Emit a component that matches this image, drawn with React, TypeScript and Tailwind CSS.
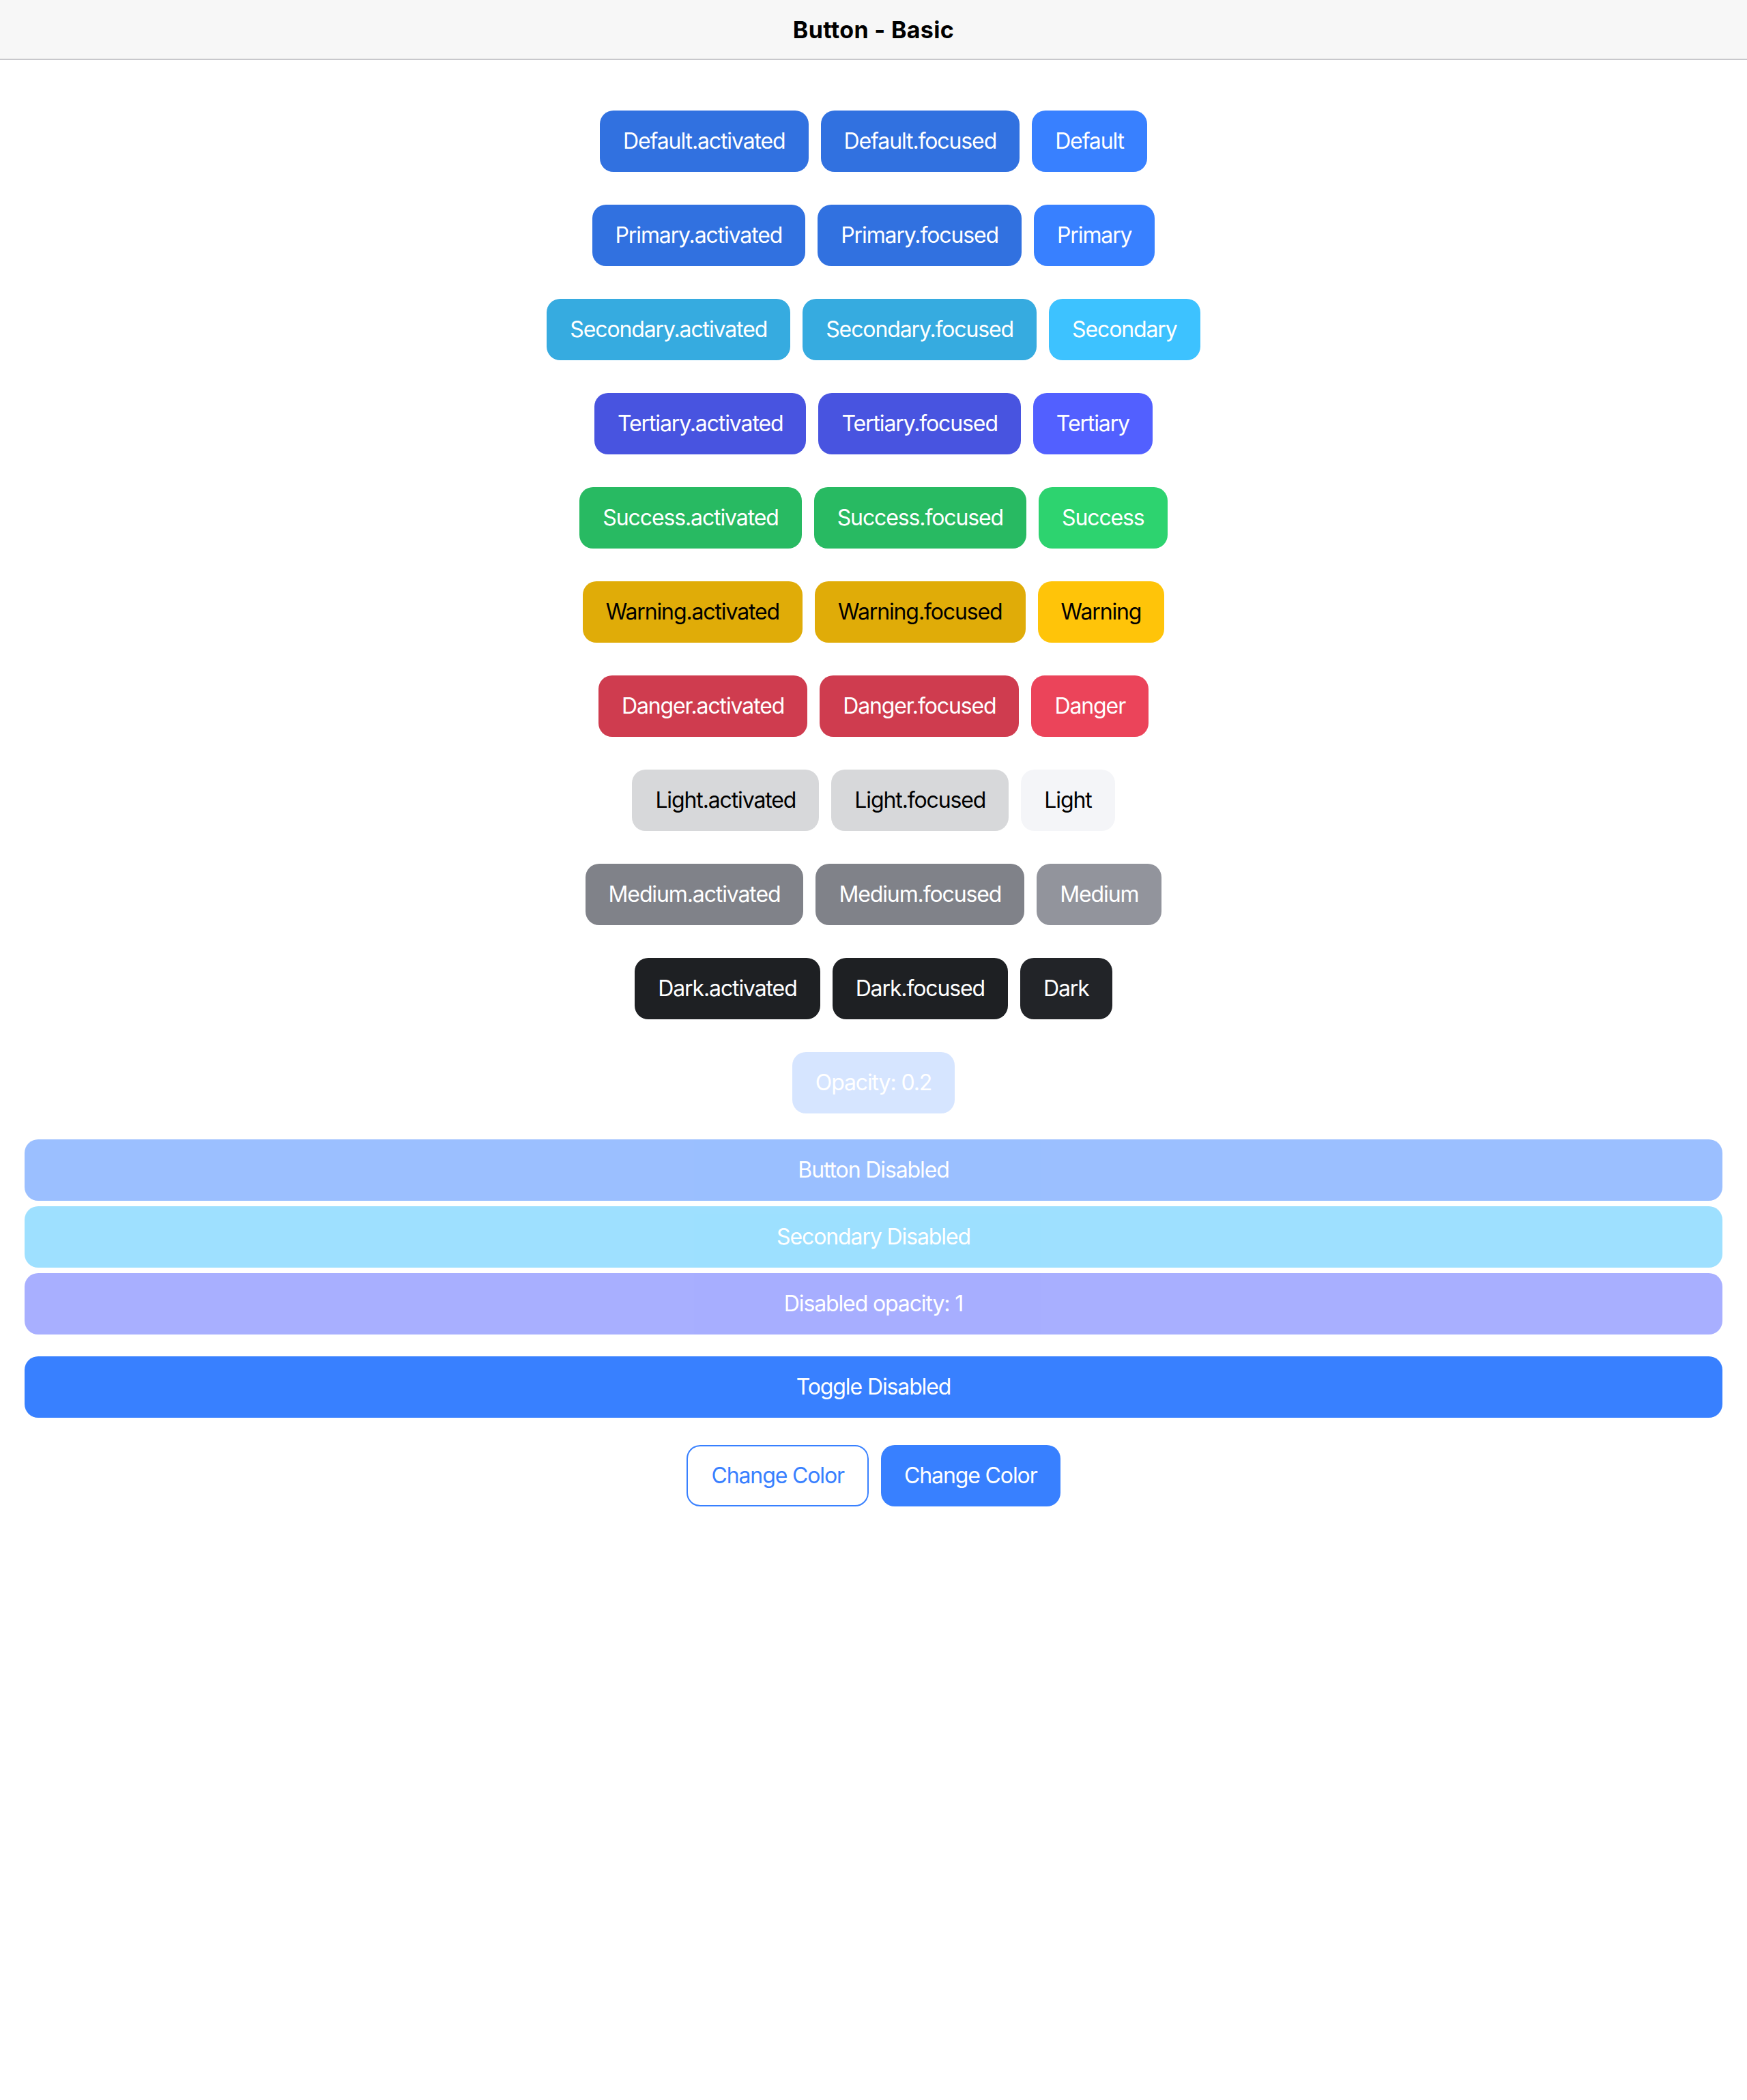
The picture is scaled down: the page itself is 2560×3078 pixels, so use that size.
import React from "react";

type Tone = {
  name: string;
  base: string;
  shade: string;
  text: string;
};

const tones: Tone[] = [
  { name: "Default", base: "bg-[#3880ff]", shade: "bg-[#3171e0]", text: "text-white" },
  { name: "Primary", base: "bg-[#3880ff]", shade: "bg-[#3171e0]", text: "text-white" },
  { name: "Secondary", base: "bg-[#3dc2ff]", shade: "bg-[#36abe0]", text: "text-white" },
  { name: "Tertiary", base: "bg-[#5260ff]", shade: "bg-[#4854e0]", text: "text-white" },
  { name: "Success", base: "bg-[#2dd36f]", shade: "bg-[#28ba62]", text: "text-white" },
  { name: "Warning", base: "bg-[#ffc409]", shade: "bg-[#e0ac08]", text: "text-black" },
  { name: "Danger", base: "bg-[#eb445a]", shade: "bg-[#cf3c4f]", text: "text-white" },
  { name: "Light", base: "bg-[#f4f5f8]", shade: "bg-[#d7d8da]", text: "text-black" },
  { name: "Medium", base: "bg-[#92949c]", shade: "bg-[#808289]", text: "text-white" },
  { name: "Dark", base: "bg-[#222428]", shade: "bg-[#1e2023]", text: "text-white" },
];

const btn =
  "h-[90px] px-[34px] rounded-[20px] text-[32px] leading-none whitespace-nowrap flex items-center justify-center tracking-[-0.035em]";

const Btn = ({ className, children }: { className: string; children: React.ReactNode }) => (
  <button type="button" className={`${btn} ${className}`}>
    {children}
  </button>
);

const BlockBtn = ({ className, children }: { className: string; children: React.ReactNode }) => (
  <button type="button" className={`${btn} w-full ${className}`}>
    {children}
  </button>
);

export default function App() {
  return (
    <div className="min-h-screen bg-white font-['Inter','Liberation_Sans',sans-serif]">
      {/* Toolbar */}
      <header className="h-[88px] bg-[#f7f7f7] border-b-2 border-[#c8c8cc] flex items-center justify-center">
        <h1 className="text-[34px] font-bold text-black tracking-[0.01em]">Button - Basic</h1>
      </header>

      <main className="px-[36px] pt-[74px]">
        {tones.map((t) => (
          <div key={t.name} className="flex justify-center gap-[18px] mb-[48px]">
            <Btn className={`${t.shade} ${t.text}`}>{t.name}.activated</Btn>
            <Btn className={`${t.shade} ${t.text}`}>{t.name}.focused</Btn>
            <Btn className={`${t.base} ${t.text}`}>{t.name}</Btn>
          </div>
        ))}

        <div className="flex justify-center mb-[38px]">
          <Btn className="bg-[#3880ff] text-white opacity-20">Opacity: 0.2</Btn>
        </div>

        <div className="flex flex-col gap-[8px]">
          <BlockBtn className="bg-[#3880ff] text-white opacity-50">Button Disabled</BlockBtn>
          <BlockBtn className="bg-[#3dc2ff] text-white opacity-50">Secondary Disabled</BlockBtn>
          <BlockBtn className="bg-[#5260ff] text-white opacity-50">Disabled opacity: 1</BlockBtn>
        </div>

        <div className="mt-[32px]">
          <BlockBtn className="bg-[#3880ff] text-white">Toggle Disabled</BlockBtn>
        </div>

        <div className="mt-[40px] flex justify-center gap-[18px]">
          <Btn className="bg-white text-[#3880ff] border-2 border-[#3880ff]">Change Color</Btn>
          <Btn className="bg-[#3880ff] text-white">Change Color</Btn>
        </div>
      </main>
    </div>
  );
}
